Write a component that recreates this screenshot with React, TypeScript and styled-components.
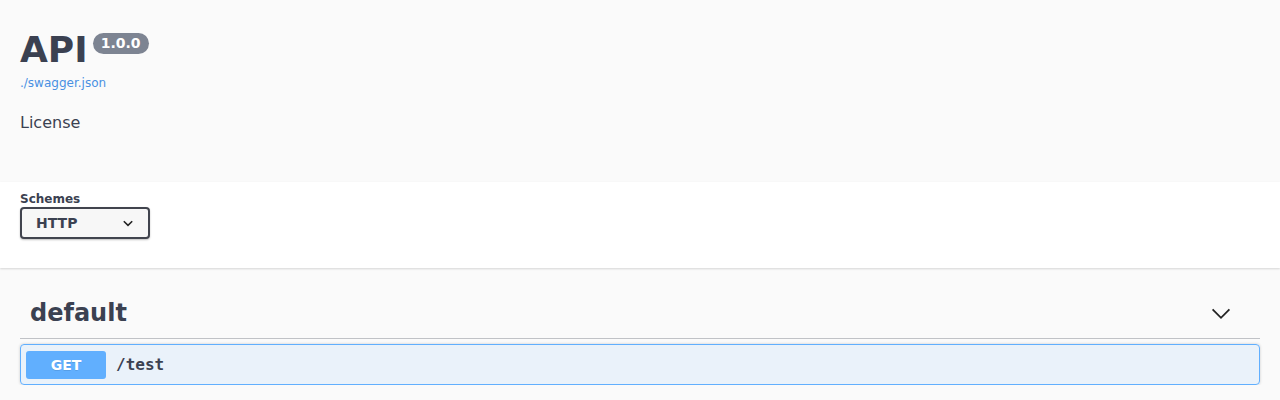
import React from 'react';
import styled, { createGlobalStyle } from 'styled-components';

const GlobalStyle = createGlobalStyle`
  html, body {
    margin: 0;
    padding: 0;
    background: #fafafa;
    font-family: "DejaVu Sans", sans-serif;
    color: #3b4151;
  }
`;

const Wrapper = styled.div`
  box-sizing: border-box;
  width: 100%;
  padding: 0 20px;
`;

const InfoSection = styled.div`
  padding: 28px 0 49px;
`;

const TitleRow = styled.div`
  display: flex;
  align-items: flex-start;
`;

const Title = styled.h2`
  margin: 0;
  font-size: 36px;
  line-height: 44px;
  font-weight: 700;
  color: #3b4151;
`;

const VersionBadge = styled.span`
  margin: 5px 0 0 5px;
  padding: 2px 8px 3px;
  background: #7d8492;
  border-radius: 57px;
  color: #fff;
  font-size: 14px;
  line-height: 16px;
  font-weight: 700;
`;

const BaseUrl = styled.a`
  display: block;
  margin-top: 4px;
  font-size: 12px;
  line-height: 15px;
  color: #4990e2;
  text-decoration: none;
`;

const License = styled.div`
  margin-top: 22px;
  font-size: 16px;
  line-height: 20px;
  color: #3b4151;
`;

const SchemeContainer = styled.div`
  background: #fff;
  box-shadow: 0 1px 2px 0 rgba(0, 0, 0, 0.15);
  padding: 10px 0 29px;
  margin-bottom: 20px;
`;

const Label = styled.div`
  font-size: 12px;
  line-height: 15px;
  font-weight: 700;
  color: #3b4151;
`;

const Select = styled.div`
  box-sizing: border-box;
  width: 130px;
  height: 32px;
  display: flex;
  align-items: center;
  justify-content: space-between;
  padding: 0 14px 0 14px;
  border: 2px solid #41444e;
  border-radius: 4px;
  background: #f7f7f7;
  box-shadow: 0 1px 2px 0 rgba(0, 0, 0, 0.25);
  font-size: 14px;
  font-weight: 700;
  color: #3b4151;
`;

const TagHeader = styled.div`
  display: flex;
  align-items: center;
  justify-content: space-between;
  height: 50px;
  padding: 0 27px 0 10px;
  border-bottom: 1px solid rgba(59, 65, 81, 0.3);
  margin-bottom: 5px;
`;

const TagName = styled.h3`
  margin: 0;
  font-size: 24px;
  font-weight: 700;
  color: #3b4151;
`;

const OpBlock = styled.div`
  box-sizing: border-box;
  height: 41px;
  display: flex;
  align-items: center;
  padding: 0 5px;
  border: 1px solid #61affe;
  border-radius: 4px;
  background: rgba(97, 175, 254, 0.1);
  box-shadow: 0 0 3px rgba(0, 0, 0, 0.19);
`;

const Method = styled.span`
  min-width: 80px;
  padding: 6px 0;
  border-radius: 3px;
  background: #61affe;
  color: #fff;
  font-size: 14px;
  line-height: 16px;
  font-weight: 700;
  text-align: center;
  text-shadow: 0 1px 0 rgba(0, 0, 0, 0.1);
`;

const Path = styled.span`
  padding: 0 10px;
  font-family: "DejaVu Sans Mono", monospace;
  font-size: 16px;
  font-weight: 600;
  color: #3b4151;
`;

const Chevron = ({ size, width }: { size: number; width: number }) => (
  <svg width={size} height={size} viewBox="0 0 20 20" fill="none">
    <path d="M3 7l7 7 7-7" stroke="#222" strokeWidth={width} />
  </svg>
);

const App = () => (
  <>
    <GlobalStyle />
    <Wrapper>
      <InfoSection>
        <TitleRow>
          <Title>API</Title>
          <VersionBadge>1.0.0</VersionBadge>
        </TitleRow>
        <BaseUrl href="#">./swagger.json</BaseUrl>
        <License>License</License>
      </InfoSection>
    </Wrapper>
    <SchemeContainer>
      <Wrapper>
        <Label>Schemes</Label>
        <Select>
          <span>HTTP</span>
          <Chevron size={12} width={2.6} />
        </Select>
      </Wrapper>
    </SchemeContainer>
    <Wrapper>
      <TagHeader>
        <TagName>default</TagName>
        <Chevron size={24} width={1.5} />
      </TagHeader>
      <OpBlock>
        <Method>GET</Method>
        <Path>/test</Path>
      </OpBlock>
    </Wrapper>
  </>
);

export default App;
